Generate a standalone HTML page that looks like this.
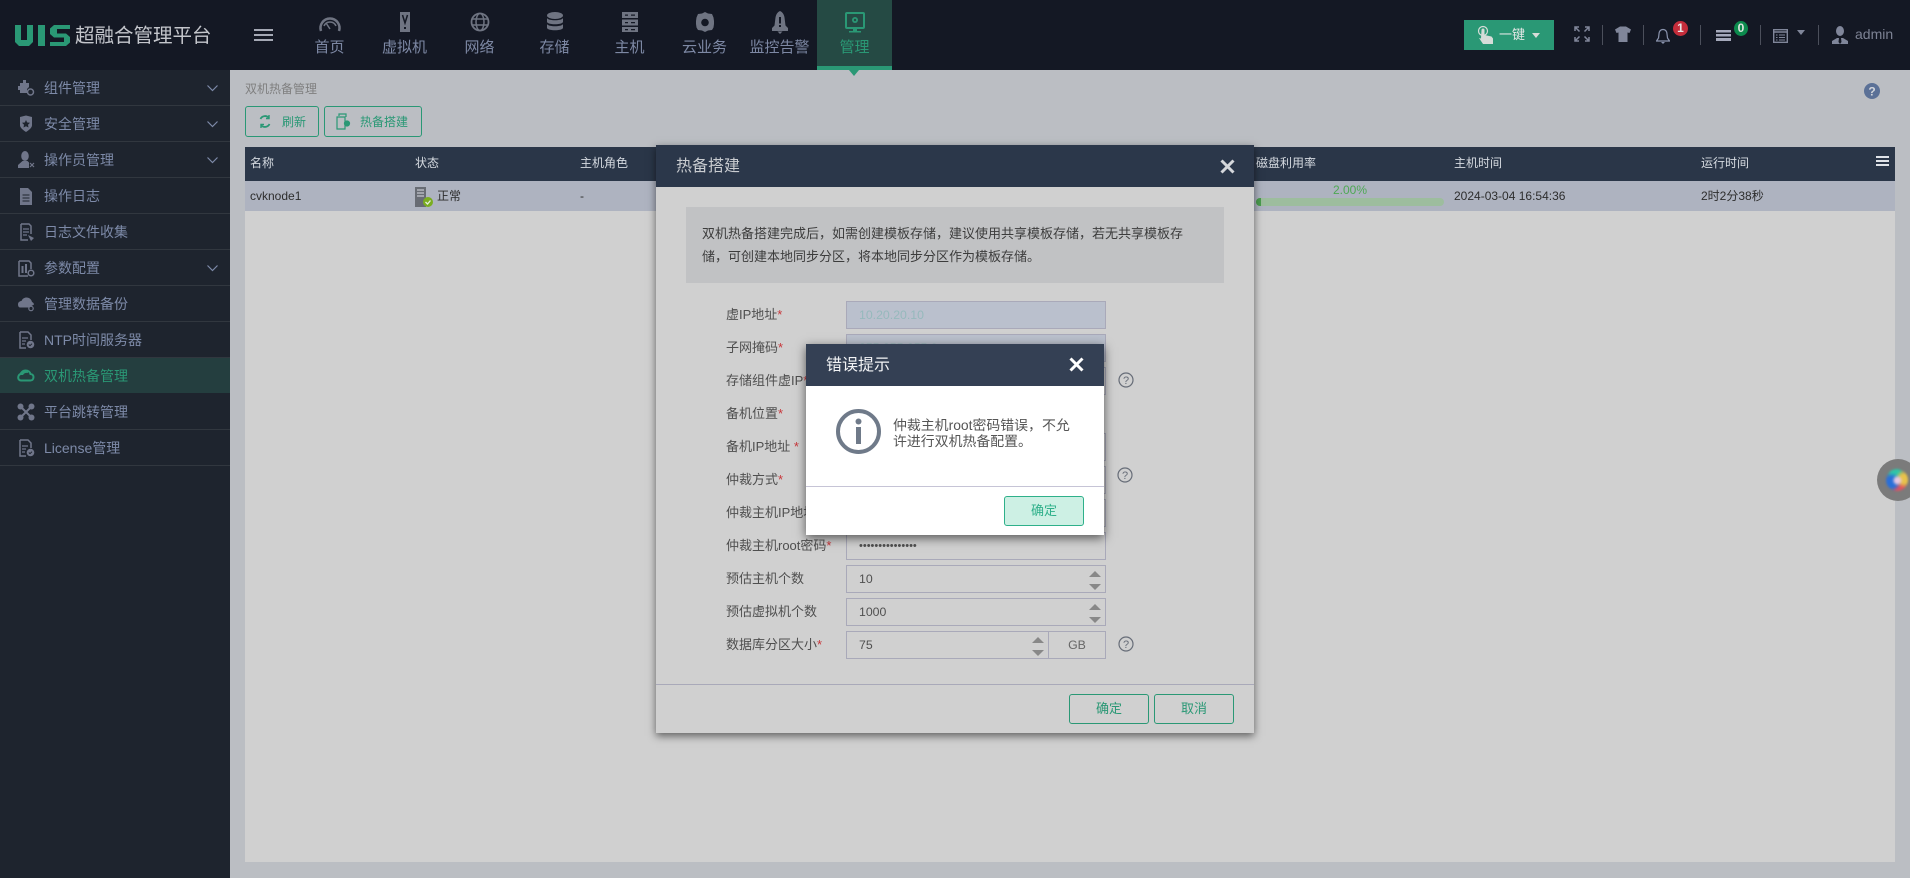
<!DOCTYPE html>
<html lang="zh">
<head>
<meta charset="utf-8">
<title>UIS 超融合管理平台</title>
<style>
html,body{margin:0;padding:0}
body{width:1910px;height:878px;overflow:hidden;position:relative;background:#bbbec3;font-family:"Liberation Sans","Noto Sans CJK SC",sans-serif;font-size:13px}
div,span,svg{box-sizing:border-box}
.a{position:absolute}
.t{position:absolute;white-space:nowrap}
#top{position:absolute;left:0;top:0;width:1910px;height:70px;background:#141824}
.nav{position:absolute;top:0;width:75px;height:70px;text-align:center;color:#7d88a4;font-size:15px}
.nav span{position:absolute;left:0;right:0;top:37px;line-height:22px}
.nav svg{position:absolute;left:25px;top:10px}
.sep{position:absolute;top:25px;width:1px;height:20px;background:#4b4f5b}
#side{position:absolute;left:0;top:70px;width:230px;height:808px;background:#1e242e}
.si{position:absolute;left:0;width:230px;height:36px;border-bottom:1px solid #31373f;color:#7d8aa8;font-size:14px;line-height:36px;padding-left:44px}
.si svg.ic{position:absolute;left:17px;top:9px}
.si svg.ch{position:absolute;left:207px;top:15px}
.si.on{background:#243e3f;color:#2a9875}
.btn{position:absolute;border:1px solid #2a9875;border-radius:3px;color:#2a9875;text-align:center}
.th{position:absolute;top:147px;height:34px;line-height:33px;color:#d5dae0;font-size:12px;white-space:nowrap}
.td{position:absolute;top:181px;height:30px;line-height:30px;color:#2d2d2d;font-size:12px;white-space:nowrap}
.lb{position:absolute;left:726px;height:28px;line-height:28px;color:#4f4f4f;font-size:13px;white-space:nowrap}
.lb i{color:#c8363a;font-style:normal}
.in{position:absolute;left:846px;width:260px;height:28px;border:1px solid #a9a9b9;line-height:26px;padding-left:12px;color:#505050;font-size:12.300px;background:#d0d0d0}
.in.d{background:#bac0cd;color:#96b9bc}
.up{position:absolute;width:0;height:0;border-left:6px solid transparent;border-right:6px solid transparent;border-bottom:6px solid #888}
.dn{position:absolute;width:0;height:0;border-left:6px solid transparent;border-right:6px solid transparent;border-top:6px solid #888}
</style>
</head>
<body>

<div id="top">
  <svg class="a" style="left:15px;top:25px" width="55" height="21" viewBox="0 0 55 21">
    <path d="M0 0h6v15h6V0h6v17l-4 4H4l-4-4z" fill="#2a9875"/>
    <path d="M23 0h7v21h-7z" fill="#2a9875"/>
    <path d="M39 0h16v4H42v4.500h9l4 3.500v5.500L51 21H35v-4h14v-4.500h-10l-4-3.500V3.500z" fill="#2a9875"/>
  </svg>
  <div class="t" style="left:75px;top:22px;font-size:19.500px;line-height:28px;color:#c4c6cc">超融合管理平台</div>
  <div class="a" style="left:254px;top:29px;width:19px;height:2px;background:#a5a9b5;box-shadow:0 5px 0 #a5a9b5,0 10px 0 #a5a9b5"></div>

  <div class="nav" style="left:292px"><svg width="26" height="26" viewBox="0 0 26 26"><path d="M4 21a9.500 9.500 0 1 1 18 0" fill="none" stroke="#6f7482" stroke-width="2.500"/><path d="M7 16a6.500 6.500 0 0 1 12 0M13 19l-4-6" fill="none" stroke="#6f7482" stroke-width="1.500"/></svg><span>首页</span></div>
  <div class="nav" style="left:367px"><svg width="26" height="26" viewBox="0 0 26 26"><path d="M8 2h10v20H8z" fill="#6f7482"/><path d="M10.500 5l2.500 8 2.500-8" fill="none" stroke="#141824" stroke-width="1.500"/><path d="M12 17h2v2h-2z" fill="#141824"/></svg><span>虚拟机</span></div>
  <div class="nav" style="left:442px"><svg width="26" height="26" viewBox="0 0 26 26"><circle cx="13" cy="12" r="8.500" fill="none" stroke="#6f7482" stroke-width="1.800"/><ellipse cx="13" cy="12" rx="4" ry="8.500" fill="none" stroke="#6f7482" stroke-width="1.500"/><path d="M5 9h16M5 15h16" stroke="#6f7482" stroke-width="1.500"/></svg><span>网络</span></div>
  <div class="nav" style="left:517px"><svg width="26" height="26" viewBox="0 0 26 26"><ellipse cx="13" cy="5.500" rx="8" ry="3.500" fill="#6f7482"/><path d="M5 8c1 3 15 3 16 0v4c-1 3-15 3-16 0zM5 14c1 3 15 3 16 0v4c-1 3-15 3-16 0z" fill="#6f7482"/></svg><span>存储</span></div>
  <div class="nav" style="left:592px"><svg width="26" height="26" viewBox="0 0 26 26"><path d="M5 2h16v6H5zM5 9.500h16v6H5zM5 17h16v5H5z" fill="#6f7482"/><path d="M8 4.500h3v1.200H8zM14 4.500h4v1.200h-4zM8 12h3v1.200H8zM14 12h4v1.200h-4zM8 19h3v1.200H8zM14 19h4v1.200h-4z" fill="#141824"/></svg><span>主机</span></div>
  <div class="nav" style="left:667px"><svg width="26" height="26" viewBox="0 0 26 26"><path d="M13 2l3 1.500 4 .5 1.500 3.500L22 11v3l-.5 3.500-1.500 2.500-4 .5-3 1.500-3-1.500-4-.5-1.500-2.500L4 14v-3l.5-3.500L6 4l4-.5z" fill="#6f7482"/><circle cx="13" cy="12.500" r="3.800" fill="#141824"/></svg><span>云业务</span></div>
  <div class="nav" style="left:742px"><svg width="26" height="26" viewBox="0 0 26 26"><path d="M13 1c2.500 1 4 3.500 4.500 6.500l1 8L21 18v3H5v-3l2.500-2.500 1-8C9 4.500 10.500 2 13 1z" fill="#6f7482"/><path d="M12 7h2v6.500h-2zM12 15h2v2h-2z" fill="#141824"/><path d="M10.500 21.500h5l-2.500 2.500z" fill="#6f7482"/></svg><span>监控告警</span></div>
  <div class="nav" style="left:817px;background:#254a44;color:#2a9875"><svg width="26" height="26" viewBox="0 0 26 26"><path d="M5 3h16a1 1 0 0 1 1 1v13a1 1 0 0 1-1 1H5a1 1 0 0 1-1-1V4a1 1 0 0 1 1-1z" fill="none" stroke="#2a9875" stroke-width="2"/><circle cx="13" cy="10" r="3" fill="#2a9875"/><circle cx="13" cy="10" r="1.200" fill="#254a44"/><path d="M11 18h4v3h-4zM7 21h12v1.500H7z" fill="#2a9875"/></svg><span>管理</span></div>
  <div class="a" style="left:817px;top:66px;width:75px;height:4px;background:#2a9875"></div>

  <div class="a" style="left:1464px;top:20px;width:90px;height:30px;background:#2a9875"></div>
  <svg class="a" style="left:1477px;top:25px" width="18" height="20" viewBox="0 0 18 20"><circle cx="6" cy="6" r="4.500" fill="none" stroke="#d6dcd8" stroke-width="1.200"/><path d="M4.500 5a1.500 1.500 0 0 1 3 0v5l7 1.500 1.500 2v5.500H6l-4-6 2 .5z" fill="#d6dcd8"/></svg>
  <div class="t" style="left:1499px;top:20px;line-height:29px;font-size:13px;color:#e4e8e6">一键</div>
  <div class="a" style="left:1532px;top:33px;border-left:4px solid transparent;border-right:4px solid transparent;border-top:5px solid #d6dcd8"></div>

  <svg class="a" style="left:1574px;top:26px" width="16" height="16" viewBox="0 0 16 16" fill="none" stroke="#80869a" stroke-width="1.500"><path d="M1 5V1h4M1 1l4.500 4.500M11 1h4v4M15 1l-4.500 4.500M1 11v4h4M1 15l4.500-4.500M15 11v4h-4M15 15l-4.500-4.500"/></svg>
  <div class="sep" style="left:1602px"></div>
  <svg class="a" style="left:1615px;top:26px" width="16" height="16" viewBox="0 0 16 16"><path d="M5 0.500h6l5 3-1.500 3.500-2-.5V16H3.500V6.500l-2 .5L0 3.500z" fill="#80869a"/></svg>
  <div class="sep" style="left:1643px"></div>
  <svg class="a" style="left:1656px;top:28px" width="14" height="16" viewBox="0 0 14 16"><path d="M7 1.500c2.500 0 4 2 4 4.500l.5 4L13.500 13H.5l2-3 .5-4c0-2.500 1.500-4.500 4-4.500z" fill="none" stroke="#8a93ad" stroke-width="1.200"/><path d="M5 14h4l-2 2z" fill="#8a93ad"/></svg>
  <div class="a" style="left:1673px;top:21px;width:15px;height:15px;border-radius:50%;background:#c42d3b;color:#e6e6e6;font-size:12px;font-weight:bold;line-height:15px;text-align:center">1</div>
  <div class="sep" style="left:1700px"></div>
  <svg class="a" style="left:1716px;top:30px" width="15" height="11" viewBox="0 0 15 11"><path d="M0 0h15v2.500H0zM0 4h15v2.500H0zM0 8h15v3H0z" fill="#a5a9bb"/></svg>
  <div class="a" style="left:1734px;top:21px;width:14px;height:15px;border-radius:50%;background:#0c8a4d;color:#dfe6e0;font-size:12px;font-weight:bold;line-height:15px;text-align:center">0</div>
  <div class="sep" style="left:1760px"></div>
  <svg class="a" style="left:1773px;top:29px" width="15" height="14" viewBox="0 0 15 14" fill="none" stroke="#80869a" stroke-width="1.400"><path d="M.7.700h13.600v12.600H.7zM.7 3h13.600"/><path d="M3 6h1.500M3 8.500h1.500M3 11h1.500M6 6h6M6 8.500h6M6 11h6" stroke-width="1"/></svg>
  <div class="a" style="left:1797px;top:30px;border-left:4px solid transparent;border-right:4px solid transparent;border-top:5px solid #80869a"></div>
  <div class="sep" style="left:1818px"></div>
  <svg class="a" style="left:1832px;top:26px" width="16" height="18" viewBox="0 0 16 18"><ellipse cx="8" cy="5" rx="4" ry="5" fill="#80869a"/><path d="M0 18v-3l5-3h6l5 3v3z" fill="#80869a"/><path d="M7 12h2l.5 4-1.500 2-1.500-2z" fill="#141824"/></svg>
  <div class="t" style="left:1855px;top:24px;line-height:20px;font-size:14px;color:#7d8294">admin</div>
</div>
<div class="a" style="left:849px;top:70px;border-left:5px solid transparent;border-right:5px solid transparent;border-top:6px solid #2a9875"></div>

<div id="side">
  <div class="si" style="top:0">组件管理<svg class="ic" width="18" height="18" viewBox="0 0 18 18"><path d="M3 4h3V1h3v3h3v4l-2 2v4H3v-3H1V7h2z" fill="#70768a"/><circle cx="13.500" cy="13" r="3" fill="#1e242e" stroke="#70768a" stroke-width="1.500"/></svg><svg class="ch" width="11" height="7" viewBox="0 0 11 7"><path d="M.5.500l5 5 5-5" fill="none" stroke="#7d8aa8" stroke-width="1.200"/></svg></div>
  <div class="si" style="top:36px">安全管理<svg class="ic" width="18" height="18" viewBox="0 0 18 18"><path d="M3 2l6-1.500L15 2v8c0 3-3 5-6 7-3-2-6-4-6-7z" fill="#70768a"/><path d="M9 5l1.200 2.500 2.800.3-2 2 .5 2.700L9 11.200l-2.500 1.300.5-2.700-2-2 2.800-.3z" fill="#1e242e"/></svg><svg class="ch" width="11" height="7" viewBox="0 0 11 7"><path d="M.5.500l5 5 5-5" fill="none" stroke="#7d8aa8" stroke-width="1.200"/></svg></div>
  <div class="si" style="top:72px">操作员管理<svg class="ic" width="18" height="18" viewBox="0 0 18 18"><ellipse cx="8" cy="5" rx="3.800" ry="5" fill="#70768a"/><path d="M1 17v-3l4.500-4h5l1.500 1.500V17z" fill="#70768a"/><path d="M13 12l4 4M17 12l-4 4" stroke="#70768a" stroke-width="1.200"/></svg><svg class="ch" width="11" height="7" viewBox="0 0 11 7"><path d="M.5.500l5 5 5-5" fill="none" stroke="#7d8aa8" stroke-width="1.200"/></svg></div>
  <div class="si" style="top:108px">操作日志<svg class="ic" width="18" height="18" viewBox="0 0 18 18"><path d="M3 1h8l4 4v13H3z" fill="#70768a"/><path d="M5.500 8h7M5.500 11h7M5.500 14h7" stroke="#1e242e" stroke-width="1"/></svg></div>
  <div class="si" style="top:144px">日志文件收集<svg class="ic" width="18" height="18" viewBox="0 0 18 18"><path d="M4 1h8l2 2v8M4 1v16h7" fill="none" stroke="#70768a" stroke-width="1.500"/><path d="M6 6h6M6 9h6M6 12h4" stroke="#70768a" stroke-width="1.200"/><path d="M11 12l6 3-3 3z" fill="#70768a"/></svg></div>
  <div class="si" style="top:180px">参数配置<svg class="ic" width="18" height="18" viewBox="0 0 18 18"><path d="M2 2h10l2 2v6M2 2v15h9" fill="none" stroke="#70768a" stroke-width="1.500"/><path d="M4.500 7h2v7h-2zM8 5h2v9H8z" fill="#70768a"/><circle cx="14" cy="14" r="2.800" fill="none" stroke="#70768a" stroke-width="1.500"/></svg><svg class="ch" width="11" height="7" viewBox="0 0 11 7"><path d="M.5.500l5 5 5-5" fill="none" stroke="#7d8aa8" stroke-width="1.200"/></svg></div>
  <div class="si" style="top:216px">管理数据备份<svg class="ic" width="18" height="18" viewBox="0 0 18 18"><path d="M1 9.500C1 7 3 6 4.500 6 5.500 3.500 7.500 2.500 9.500 2.500c3 0 5 2 5.500 4.500 1 .3 2 1.500 2 2.500l-5 3H3c-1.500 0-2-2-2-3z" fill="#70768a"/><circle cx="14" cy="13.500" r="2.200" fill="none" stroke="#70768a" stroke-width="1.200"/></svg></div>
  <div class="si" style="top:252px">NTP时间服务器<svg class="ic" width="18" height="18" viewBox="0 0 18 18"><path d="M3 1h8l3 3v5M3 1v16h6" fill="none" stroke="#70768a" stroke-width="1.500"/><path d="M5 7h6M5 10h4M5 13h3" stroke="#70768a" stroke-width="1.200"/><circle cx="13.500" cy="13.500" r="3.800" fill="#70768a"/><path d="M11.800 13.500l1.200 1.200 2-2" fill="none" stroke="#1e242e"/></svg></div>
  <div class="si on" style="top:288px;height:35px;border:0">双机热备管理<svg class="ic" width="18" height="18" viewBox="0 0 18 18"><path d="M1.500 12c-1-3 1-5 2.500-5C5 4 7 3.500 8.500 3.500c2.500 0 4.500 1.500 5 3.500 1.800 0 3 1.500 3 3 0 2-1 3.500-3 3.500H4c-1 0-2-.7-2.500-1.500z" fill="none" stroke="#2a9875" stroke-width="2"/><path d="M2 8c1-3 3-5 6-5s3 2 3 3c-2-.5-4 0-5 2z" fill="#2a9875"/></svg></div>
  <div class="si" style="top:324px">平台跳转管理<svg class="ic" width="18" height="18" viewBox="0 0 18 18"><path d="M3 3l12 12M15 3L3 15" stroke="#70768a" stroke-width="2"/><circle cx="3.500" cy="3.500" r="3" fill="#70768a"/><circle cx="14.500" cy="3.500" r="3" fill="#70768a"/><circle cx="3.500" cy="14.500" r="3" fill="#70768a"/><circle cx="14.500" cy="14.500" r="3" fill="#70768a"/></svg></div>
  <div class="si" style="top:360px">License管理<svg class="ic" width="18" height="18" viewBox="0 0 18 18"><path d="M3 1h8l3 3v5M3 1v16h6" fill="none" stroke="#70768a" stroke-width="1.500"/><path d="M5 7h6M5 10h4M5 13h3" stroke="#70768a" stroke-width="1.200"/><circle cx="13.500" cy="13.500" r="3.800" fill="#70768a"/><path d="M11.800 13.500l1.200 1.200 2-2" fill="none" stroke="#1e242e"/></svg></div>
</div>

<div class="t" style="left:245px;top:80px;line-height:18px;font-size:12px;color:#7f7f7f">双机热备管理</div>
<svg class="a" style="left:1864px;top:83px" width="16" height="16" viewBox="0 0 16 16"><circle cx="8" cy="8" r="8" fill="#5b7197"/><text x="8" y="12.500" font-size="12" font-weight="bold" fill="#d2d6dc" text-anchor="middle" font-family="Liberation Sans">?</text></svg>

<div class="btn" style="left:245px;top:106px;width:74px;height:31px;line-height:30px;padding-left:24px;font-size:12px">刷新</div>
<svg class="a" style="left:258px;top:114px" width="14" height="15" viewBox="0 0 14 15" fill="none" stroke="#2a9875" stroke-width="1.800"><path d="M2.500 5A5 5 0 0 1 11 4M11.500 10A5 5 0 0 1 3 11"/><path d="M11 1v3.500H8M3 14v-3.500h3" stroke-width="1.400"/></svg>
<div class="btn" style="left:324px;top:106px;width:98px;height:31px;line-height:30px;padding-left:22px;font-size:12px">热备搭建</div>
<svg class="a" style="left:336px;top:113px" width="15" height="17" viewBox="0 0 15 17" fill="none" stroke="#2a9875" stroke-width="1.200"><path d="M3 3V1h7v3M1 4h8v12H1z"/><circle cx="11" cy="10.500" r="2.500" fill="#2a9875"/></svg>

<div class="a" style="left:245px;top:147px;width:1650px;height:34px;background:#2a3648"></div>
<div class="a" style="left:245px;top:181px;width:1650px;height:30px;background:#aeb3c0"></div>
<div class="a" style="left:245px;top:211px;width:1650px;height:651px;background:#d0d0d0"></div>
<div class="th" style="left:250px">名称</div>
<div class="th" style="left:415px">状态</div>
<div class="th" style="left:580px">主机角色</div>
<div class="th" style="left:1256px">磁盘利用率</div>
<div class="th" style="left:1454px">主机时间</div>
<div class="th" style="left:1701px">运行时间</div>
<div class="a" style="left:1876px;top:156px;width:13px;height:2px;background:#dfe3e8;box-shadow:0 4px 0 #dfe3e8,0 8px 0 #dfe3e8"></div>
<div class="td" style="left:250px">cvknode1</div>
<svg class="a" style="left:414px;top:186px" width="20" height="22" viewBox="0 0 20 22"><path d="M1 1h11v20H1z" fill="#686c74"/><path d="M3 4h7M3 7h7M3 10h7" stroke="#c3c6ce" stroke-width="1.200"/><circle cx="14" cy="16" r="5" fill="#7aad1f"/><path d="M11.500 16l2 2 3-3.500" fill="none" stroke="#e6eedd" stroke-width="1.300"/></svg>
<div class="td" style="left:437px">正常</div>
<div class="td" style="left:580px">-</div>
<div class="t" style="left:1300px;top:183px;width:100px;text-align:center;line-height:14px;font-size:12px;color:#4ea854">2.00%</div>
<div class="a" style="left:1256px;top:198px;width:188px;height:8px;border-radius:4px;background:#9dbd9e"></div>
<div class="a" style="left:1256px;top:198px;width:5px;height:8px;border-radius:4px 0 0 4px;background:#4a9d4e"></div>
<div class="td" style="left:1454px">2024-03-04 16:54:36</div>
<div class="td" style="left:1701px">2时2分38秒</div>

<div class="a" style="left:1877px;top:459px;width:42px;height:42px;border-radius:50%;background:#7b7b7b"></div>
<div class="a" style="left:1886px;top:469px;width:22px;height:22px;border-radius:50%;filter:blur(1px);background:radial-gradient(circle at 52% 52%,#e8c8e0 0 16%,transparent 32%),radial-gradient(circle at 25% 60%,#2a6fd8 0 24%,transparent 46%),radial-gradient(circle at 82% 45%,#e8c24a 0 20%,transparent 42%),radial-gradient(circle at 62% 90%,#e2525f 0 20%,transparent 42%),radial-gradient(circle at 42% 18%,#2fc6a8 0 20%,transparent 42%)"></div>

<!-- Modal 1 -->
<div class="a" style="left:656px;top:145px;width:598px;height:588px;background:#d0d0d0;box-shadow:0 3px 8px rgba(0,0,0,.55)"></div>
<div class="a" style="left:656px;top:145px;width:598px;height:42px;background:#2b374a"></div>
<div class="t" style="left:676px;top:154px;line-height:26px;font-size:16px;color:#c9ccd0">热备搭建</div>
<svg class="a" style="left:1220px;top:159px" width="15" height="15" viewBox="0 0 15 15"><path d="M1.500 1.500l12 12M13.500 1.500l-12 12" stroke="#d5d7db" stroke-width="3"/></svg>
<div class="a" style="left:686px;top:207px;width:538px;height:76px;background:#c1c2c4"></div>
<div class="t" style="left:702px;top:222px;line-height:23px;font-size:13px;color:#3c3c3c">双机热备搭建完成后，如需创建模板存储，建议使用共享模板存储，若无共享模板存<br>储，可创建本地同步分区，将本地同步分区作为模板存储。</div>

<div class="lb" style="top:301px">虚IP地址<i>*</i></div>
<div class="lb" style="top:334px">子网掩码<i>*</i></div>
<div class="lb" style="top:367px">存储组件虚IP<i>*</i></div>
<div class="lb" style="top:400px">备机位置<i>*</i></div>
<div class="lb" style="top:433px">备机IP地址 <i>*</i></div>
<div class="lb" style="top:466px">仲裁方式<i>*</i></div>
<div class="lb" style="top:499px">仲裁主机IP地址<i>*</i></div>
<div class="lb" style="top:532px">仲裁主机root密码<i>*</i></div>
<div class="lb" style="top:565px">预估主机个数</div>
<div class="lb" style="top:598px">预估虚拟机个数</div>
<div class="lb" style="top:631px">数据库分区大小<i>*</i></div>

<div class="in d" style="top:301px">10.20.20.10</div>
<div class="in d" style="top:334px">255.255.255.0</div>
<div class="in" style="top:367px"></div>
<div class="in" style="top:433px"></div>
<div class="in" style="top:466px"></div>
<div class="in" style="top:499px"></div>
<div class="in" style="top:532px;font-size:11px;letter-spacing:0">•••••••••••••••</div>
<div class="in" style="top:565px">10</div>
<div class="in" style="top:598px">1000</div>
<div class="in" style="top:631px">75</div>
<div class="a" style="left:1048px;top:631px;width:1px;height:28px;background:#a9a9b9"></div>
<div class="t" style="left:1049px;top:631px;width:56px;text-align:center;line-height:28px;font-size:12.300px;color:#666">GB</div>
<div class="up" style="left:1089px;top:571px"></div><div class="dn" style="left:1089px;top:584px"></div>
<div class="up" style="left:1089px;top:604px"></div><div class="dn" style="left:1089px;top:617px"></div>
<div class="up" style="left:1032px;top:637px"></div><div class="dn" style="left:1032px;top:650px"></div>

<svg class="a" style="left:1118px;top:372px" width="16" height="16" viewBox="0 0 16 16"><circle cx="8" cy="8" r="7" fill="none" stroke="#676d78" stroke-width="1.200"/><text x="8" y="12" font-size="11" fill="#676d78" text-anchor="middle" font-family="Liberation Sans">?</text></svg>
<svg class="a" style="left:1117px;top:467px" width="16" height="16" viewBox="0 0 16 16"><circle cx="8" cy="8" r="7" fill="none" stroke="#676d78" stroke-width="1.200"/><text x="8" y="12" font-size="11" fill="#676d78" text-anchor="middle" font-family="Liberation Sans">?</text></svg>
<svg class="a" style="left:1118px;top:636px" width="16" height="16" viewBox="0 0 16 16"><circle cx="8" cy="8" r="7" fill="none" stroke="#676d78" stroke-width="1.200"/><text x="8" y="12" font-size="11" fill="#676d78" text-anchor="middle" font-family="Liberation Sans">?</text></svg>

<div class="a" style="left:656px;top:684px;width:598px;height:1px;background:#a9a9b9"></div>
<div class="btn" style="left:1069px;top:694px;width:80px;height:30px;line-height:28px;font-size:13px">确定</div>
<div class="btn" style="left:1154px;top:694px;width:80px;height:30px;line-height:28px;font-size:13px">取消</div>

<!-- Modal 2 -->
<div class="a" style="left:806px;top:344px;width:298px;height:191px;background:#fff;box-shadow:0 3px 10px rgba(0,0,0,.6)"></div>
<div class="a" style="left:806px;top:344px;width:298px;height:42px;background:#344054"></div>
<div class="t" style="left:826px;top:353px;line-height:26px;font-size:16px;color:#f2f3f5">错误提示</div>
<svg class="a" style="left:1069px;top:357px" width="15" height="15" viewBox="0 0 15 15"><path d="M1.500 1.500l12 12M13.500 1.500l-12 12" stroke="#fff" stroke-width="3"/></svg>
<svg class="a" style="left:836px;top:409px" width="45" height="45" viewBox="0 0 45 45"><circle cx="22.500" cy="22.500" r="20.500" fill="none" stroke="#6f7a89" stroke-width="4"/><circle cx="22.500" cy="12.500" r="3" fill="#6f7a89"/><path d="M20 18h5v17h-5z" fill="#6f7a89"/></svg>
<div class="t" style="left:893px;top:417px;line-height:16px;font-size:13.900px;color:#555">仲裁主机root密码错误，不允<br>许进行双机热备配置。</div>
<div class="a" style="left:806px;top:486px;width:298px;height:1px;background:#c6c4d6"></div>
<div class="btn" style="left:1004px;top:496px;width:80px;height:30px;line-height:28px;font-size:13px;background:#cdf0e4;border-color:#2eb08a;color:#2eb08a">确定</div>

</body>
</html>
